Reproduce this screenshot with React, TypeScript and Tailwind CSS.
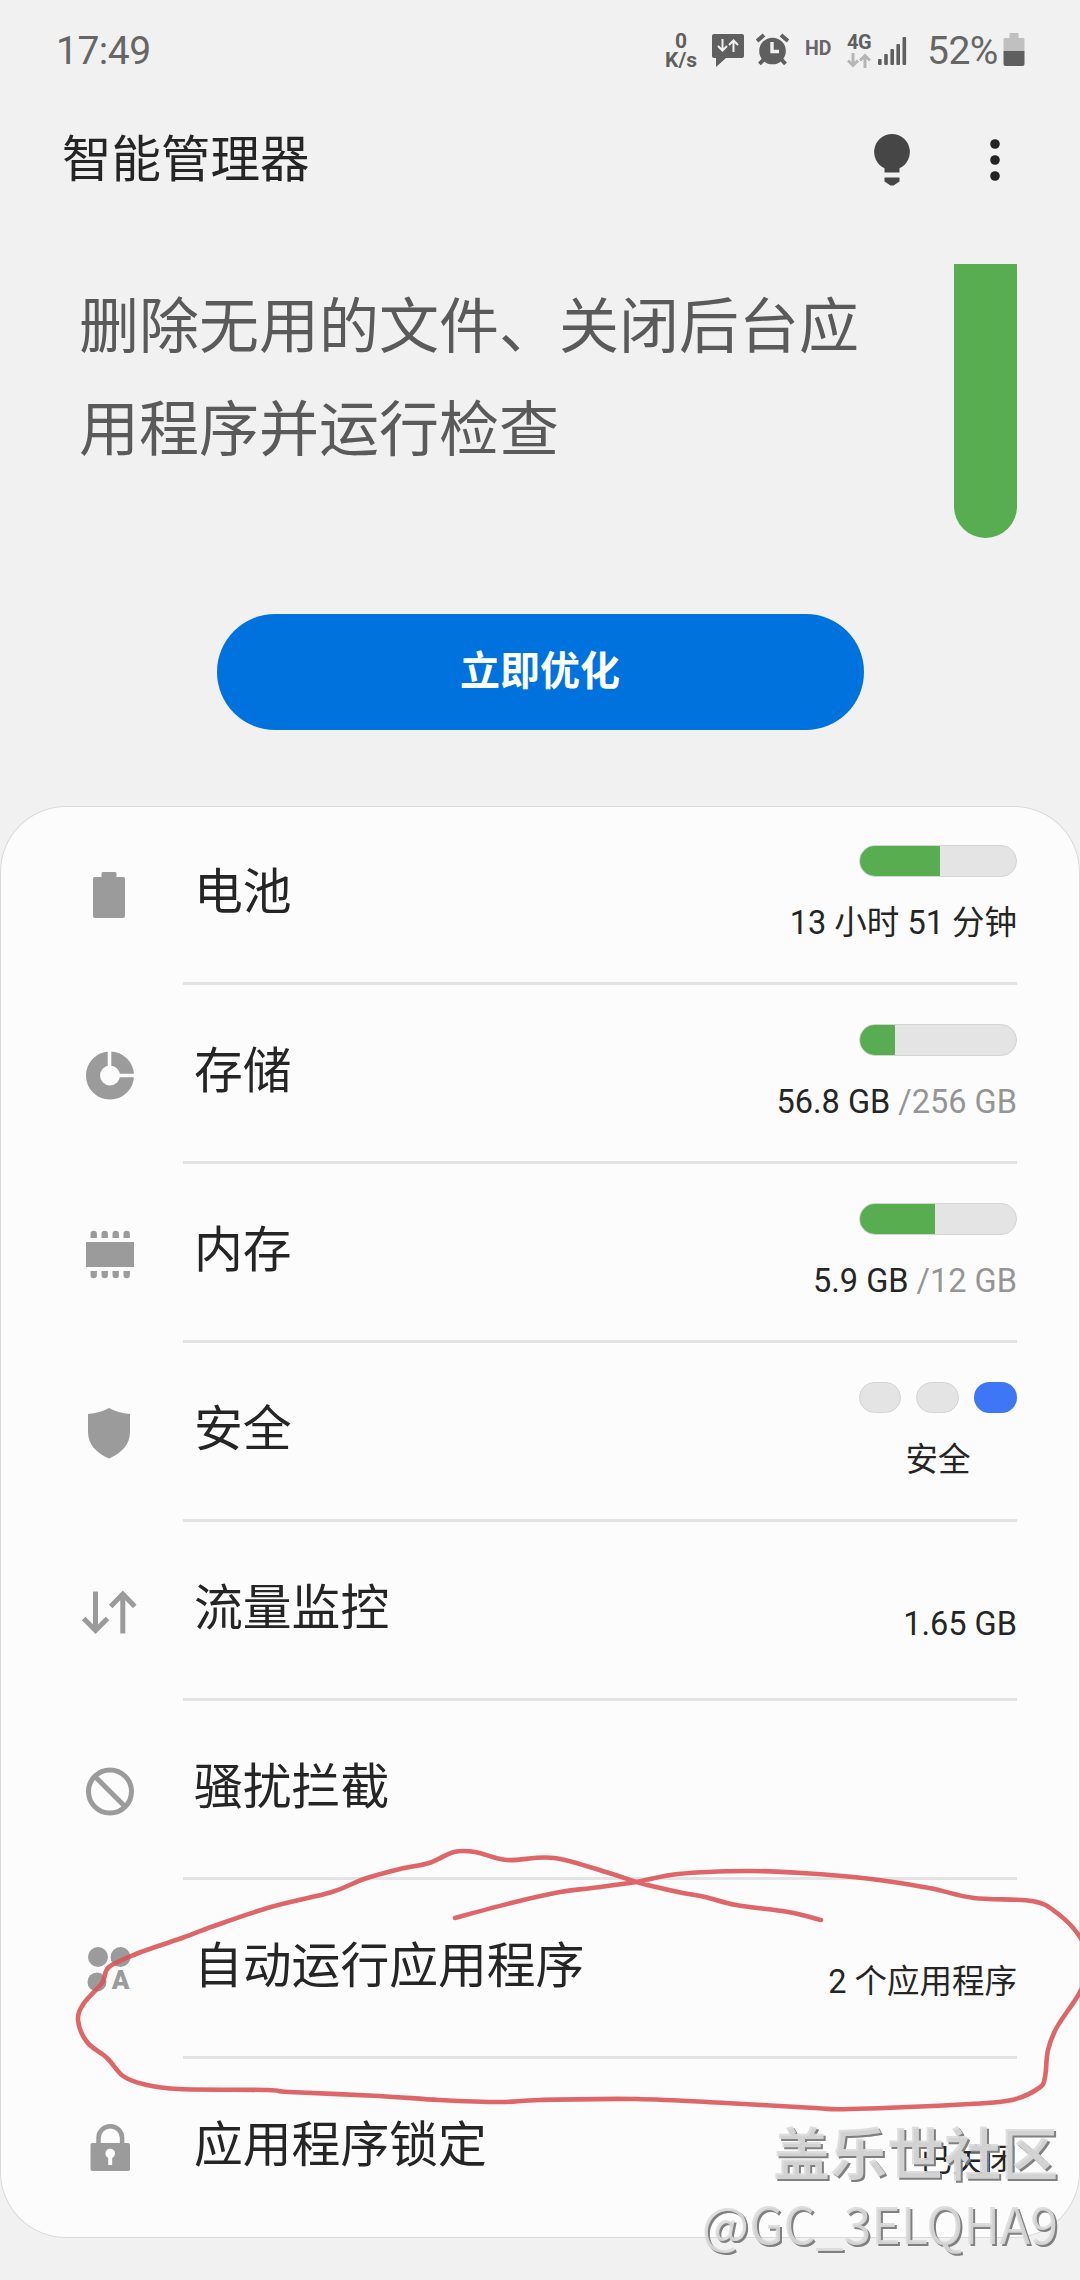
import type { ReactNode } from "react";

type Row = {
  label: string;
  icon: ReactNode;
  percent?: number;
  pills?: boolean;
  value?: string;
  total?: string;
};

const rows: Row[] = [
  { label: "电池", icon: <BatteryIcon />, percent: 52, value: "13 小时 51 分钟" },
  { label: "存储", icon: <StorageIcon />, percent: 22.8, value: "56.8 GB", total: "/256 GB" },
  { label: "内存", icon: <MemoryIcon />, percent: 48.7, value: "5.9 GB", total: "/12 GB" },
  { label: "安全", icon: <ShieldIcon />, pills: true, value: "安全" },
  { label: "流量监控", icon: <DataIcon />, value: "1.65 GB" },
  { label: "骚扰拦截", icon: <BlockIcon /> },
  { label: "自动运行应用程序", icon: <AutoRunIcon />, value: "2 个应用程序" },
  { label: "应用程序锁定", icon: <LockIcon />, value: "已关闭" },
];

// Pen strokes of the hand-drawn loop, in page pixels.
const loop: number[][] = [
  [455, 1918], [511, 1903], [560, 1892], [592, 1888], [636, 1882], [678, 1874], [747, 1871],
  [802, 1873], [871, 1879], [929, 1888], [974, 1898], [1032, 1901], [1057, 1913], [1080, 1937],
  [1090, 1964], [1080, 1992], [1057, 2027], [1048, 2050], [1045, 2077], [1039, 2088],
  [1012, 2100], [970, 2104], [850, 2109], [815, 2108], [726, 2103], [636, 2099], [540, 2100],
  [500, 2102], [439, 2100], [379, 2096], [289, 2092], [268, 2090], [179, 2089], [143, 2084],
  [123, 2076], [107, 2058], [87, 2042], [78, 2020], [84, 2003], [102, 1983], [109, 1967],
  [136, 1954], [179, 1939], [214, 1926], [271, 1907], [332, 1892], [364, 1879], [400, 1869],
  [429, 1863], [454, 1852], [475, 1852], [507, 1860], [554, 1858], [609, 1873], [640, 1883],
  [678, 1892], [705, 1897], [736, 1905], [788, 1912], [821, 1920],
];

function smoothPath(points: number[][]) {
  let d = `M${points[0][0]} ${points[0][1]}`;
  for (let i = 0; i < points.length - 1; i++) {
    const p0 = points[i - 1] ?? points[i];
    const p1 = points[i];
    const p2 = points[i + 1];
    const p3 = points[i + 2] ?? p2;
    d += `C${p1[0] + (p2[0] - p0[0]) / 6} ${p1[1] + (p2[1] - p0[1]) / 6} ${
      p2[0] - (p3[0] - p1[0]) / 6
    } ${p2[1] - (p3[1] - p1[1]) / 6} ${p2[0]} ${p2[1]}`;
  }
  return d;
}

function BatteryIcon() {
  return (
    <svg width="56" height="56" viewBox="0 0 56 56" fill="#9b9b9b">
      <path d="M20.500 5.500a1.500 1.500 0 0 1 1.500-1.500h12a1.500 1.500 0 0 1 1.500 1.500V9H42a2 2 0 0 1 2 2v37a2 2 0 0 1-2 2H14a2 2 0 0 1-2-2V11a2 2 0 0 1 2-2h6.500z" />
    </svg>
  );
}

function StorageIcon() {
  return (
    <svg width="56" height="56" viewBox="0 0 56 56">
      <circle cx="29" cy="28.500" r="17" fill="none" stroke="#9b9b9b" strokeWidth="14" />
      <path d="M28.500 2v24M31 28.500h24" stroke="#fcfcfc" strokeWidth="3.600" />
    </svg>
  );
}

function MemoryIcon() {
  return (
    <svg width="56" height="56" viewBox="0 0 56 56" fill="#9b9b9b">
      <rect x="5" y="16" width="48" height="25" />
      {[9.500, 20.500, 31.500, 42.500].map((x) => (
        <g key={x}>
          <path d={`M${x} 12V8a3.200 3.200 0 0 1 6.400 0v4z`} />
          <path d={`M${x} 45v4a3.200 3.200 0 0 0 6.400 0v-4z`} />
        </g>
      ))}
    </svg>
  );
}

function ShieldIcon() {
  return (
    <svg width="56" height="56" viewBox="0 0 56 56" fill="#9b9b9b">
      <path d="M28 3c6 3.300 13 5.500 21 6v18c0 12-8 21-21 26.500C15 48 7 39 7 27V9c8-.5 15-2.700 21-6z" />
    </svg>
  );
}

function DataIcon() {
  return (
    <svg width="56" height="56" viewBox="0 0 56 56" fill="none" stroke="#9b9b9b" strokeWidth="5">
      <path d="M14.500 7.500v40M2.700 34.500 14.500 46.500l12-12" />
      <path d="M41.800 49.500V10M29.700 22.500 41.800 10l12 12.500" />
    </svg>
  );
}

function BlockIcon() {
  return (
    <svg width="56" height="56" viewBox="0 0 56 56" fill="none" stroke="#9b9b9b" strokeWidth="5">
      <circle cx="29" cy="28.500" r="21.500" />
      <path d="M14 13.500l30 30" />
    </svg>
  );
}

function AutoRunIcon() {
  return (
    <svg width="56" height="56" viewBox="0 0 56 56" fill="#9b9b9b">
      <circle cx="17" cy="15" r="10" />
      <circle cx="39.500" cy="15" r="10" />
      <circle cx="16" cy="40" r="9.500" />
      <text x="39.500" y="47" fontSize="26" fontWeight="900" textAnchor="middle" fontFamily="Roboto, sans-serif">
        A
      </text>
    </svg>
  );
}

function LockIcon() {
  return (
    <svg width="56" height="56" viewBox="0 0 56 56">
      <path d="M17.500 24v-7a11.800 11.800 0 0 1 23.600 0v7" fill="none" stroke="#9b9b9b" strokeWidth="4.500" />
      <rect x="9.500" y="22" width="39.500" height="28" rx="2" fill="#9b9b9b" />
      <circle cx="29.200" cy="32.500" r="4.800" fill="#fcfcfc" />
      <path d="M29.200 33v11" stroke="#fcfcfc" strokeWidth="4" />
    </svg>
  );
}

function StatusBar() {
  return (
    <div className="flex h-[102px] items-start justify-between pl-[56px] pr-[55px] text-[#666]">
      <span className="mt-[29px] text-[39px] leading-[44px] tracking-[-0.5px]">17:49</span>
      <div className="flex items-start">
        <div className="mt-[32px] mr-[15px] w-[32px] text-center text-[21px] font-bold leading-[19px] text-[#5f5f5f]">
          <div>0</div>
          <div>K/s</div>
        </div>
        <svg className="mt-[33px]" width="32" height="34" viewBox="0 0 32 34">
          <path d="M2 1h28a2 2 0 0 1 2 2v20a2 2 0 0 1-2 2H14L4 34V25H2a2 2 0 0 1-2-2V3a2 2 0 0 1 2-2z" fill="#5f5f5f" />
          <path d="M10.500 6v11M6 13l4.500 4.500L15 13M21.500 19V8M17 12l4.500-4.500L26 12" fill="none" stroke="#f1f1f1" strokeWidth="2" />
        </svg>
        <svg className="ml-[12px] mt-[33px]" width="33" height="33" viewBox="0 0 33 33">
          <circle cx="16.500" cy="18" r="13.300" fill="#5f5f5f" />
          <path d="M1 8l7-6M32 8l-7-6" stroke="#5f5f5f" strokeWidth="4" />
          <path d="M8 26l-4.500 5M25 26l4.500 5" stroke="#5f5f5f" strokeWidth="4" />
          <path d="M16 9v9.500h7" fill="none" stroke="#f1f1f1" strokeWidth="3.400" />
        </svg>
        <span className="ml-[16px] mt-[37px] w-[28px] text-[19.500px] font-bold leading-[24px]">HD</span>
        <div className="ml-[14px] mt-[31px] w-[26px]">
          <div className="text-[20px] font-bold leading-[22px] tracking-[-0.5px] text-[#5f5f5f]">4G</div>
          <svg width="24" height="15" viewBox="0 0 24 15" fill="none" stroke="#b5b5b5" strokeWidth="3">
            <path d="M6 0v12M1 7.500l5 5 5-5M18 15V3M13 7.500l5-5 5 5" />
          </svg>
        </div>
        <svg className="ml-[5px] mt-[36px]" width="30" height="30" viewBox="0 0 30 30" fill="#5f5f5f">
          <rect x="0" y="23" width="3.600" height="6" rx="1" />
          <rect x="6.200" y="18" width="3.600" height="11" rx="1" />
          <rect x="12.400" y="13" width="3.600" height="16" rx="1" />
          <rect x="18.400" y="8" width="3.600" height="21" rx="1" />
          <rect x="24.500" y="1" width="3.600" height="28" rx="1" />
        </svg>
        <span className="ml-[19px] mt-[29px] w-[76px] text-[39px] leading-[44px] tracking-[-0.5px]">52%</span>
        <svg className="mt-[33px]" width="22" height="34" viewBox="0 0 22 34">
          <path d="M6.500 0h9v5H20a1.500 1.500 0 0 1 1.500 1.500V18h-21V6.500A1.500 1.500 0 0 1 2 5h4.500z" fill="#c0c0c0" />
          <path d="M.5 18h21v13a2 2 0 0 1-2 2h-17a2 2 0 0 1-2-2z" fill="#5f5f5f" />
        </svg>
      </div>
    </div>
  );
}

function Header() {
  return (
    <header className="flex h-[116px] items-center justify-between pl-[62px] pr-[78px]">
      <h1 className="text-[49.500px] leading-[72px] text-[#252525]">智能管理器</h1>
      <div className="flex items-center gap-[77px]">
        <svg width="38" height="54" viewBox="0 0 38 54" fill="#464646">
          <path d="M19 1a18 18 0 0 1 7.500 34.300V39.500h-15V35.300A18 18 0 0 1 19 1z" />
          <path d="M11.500 44.500h15v4L20.500 52.500h-3L11.500 48.500z" />
        </svg>
        <svg width="14" height="44" viewBox="0 0 14 44" fill="#252525">
          <circle cx="7" cy="6" r="4.800" />
          <circle cx="7" cy="22" r="4.800" />
          <circle cx="7" cy="38" r="4.800" />
        </svg>
      </div>
    </header>
  );
}

function UsageBar({ percent }: { percent: number }) {
  return (
    <div className="h-[32px] w-[158px] overflow-hidden rounded-full border border-[#d4d4d4] bg-[#e4e4e4]">
      <div className="-m-px h-[32px] bg-[#57ad50]" style={{ width: `${percent}%` }} />
    </div>
  );
}

function ListRow({ row, last }: { row: Row; last: boolean }) {
  const stacked = row.percent !== undefined || row.pills;
  return (
    <li className="flex h-[179px] pl-[81px] pr-[63px]">
      <div className="flex w-[102px] items-center">{row.icon}</div>
      <div className={`flex flex-1 justify-between border-[#e3e3e3] ${last ? "pb-[3px]" : "border-b-[3px]"}`}>
        <span className="self-center pb-[2px] pl-[11px] text-[48.800px] leading-[72px]">{row.label}</span>
        <div className={`flex flex-col ${stacked ? "items-end pt-[39px]" : "items-end pt-[80px]"}`}>
          {row.percent !== undefined && <UsageBar percent={row.percent} />}
          {row.pills && (
            <div className="flex h-[32px] gap-[15px]">
              <span className="h-[31px] w-[42px] rounded-full border border-[#d4d4d4] bg-[#e4e4e4]" />
              <span className="h-[31px] w-[43px] rounded-full border border-[#d4d4d4] bg-[#e4e4e4]" />
              <span className="h-[31px] w-[43px] rounded-full bg-[#3e77f5]" />
            </div>
          )}
          {row.value && (
            <div
              className={`text-[32.500px] leading-[44px] ${stacked ? "mt-[24px]" : ""} ${
                row.pills ? "w-[158px] text-center" : ""
              }`}
            >
              {row.value}
              {row.total && <span className="text-[#959595]"> {row.total}</span>}
            </div>
          )}
        </div>
      </div>
    </li>
  );
}

export default function App() {
  return (
    <div className="relative h-[2280px] w-[1080px] overflow-hidden bg-[#f1f1f1] font-[Roboto,'Noto_Sans_CJK_SC',sans-serif] text-[#252525]">
      <StatusBar />
      <Header />

      <section className="flex h-[396px] justify-between pl-[79px] pr-[63px] pt-[46px]">
        <p className="w-[800px] pt-[12px] text-[60px] leading-[103px] text-[#5a5a5a]">
          删除无用的文件、关闭后台应用程序并运行检查
        </p>
        <div className="h-[274px] w-[63px] rounded-b-full bg-[#57ad50]" />
      </section>

      <button className="mx-auto block h-[116px] w-[647px] rounded-full bg-[#0072de] text-[40px] font-bold text-white">
        立即优化
      </button>

      <ul className="mt-[76px] rounded-[66px] bg-[#fcfcfc] shadow-[inset_0_0_0_1px_#d9d9d9]">
        {rows.map((row, index) => (
          <ListRow key={row.label} row={row} last={index === rows.length - 1} />
        ))}
      </ul>

      <svg className="absolute inset-0" width="1080" height="2280" viewBox="0 0 1080 2280" fill="none">
        <path d={smoothPath(loop)} stroke="#dc5558" strokeOpacity="0.9" strokeWidth="4.600" strokeLinecap="round" strokeLinejoin="round" />
      </svg>

      <div className="absolute right-[22px] bottom-[22px] text-right font-['Noto_Sans_CJK_SC',sans-serif] text-[#dadada]/90 [text-shadow:2px_2px_0_#808080]">
        <div className="text-[57px] font-bold leading-[72px]">盖乐世社区</div>
        <div className="text-[50px] leading-[72px]">@GC_3ELQHA9</div>
      </div>
    </div>
  );
}
